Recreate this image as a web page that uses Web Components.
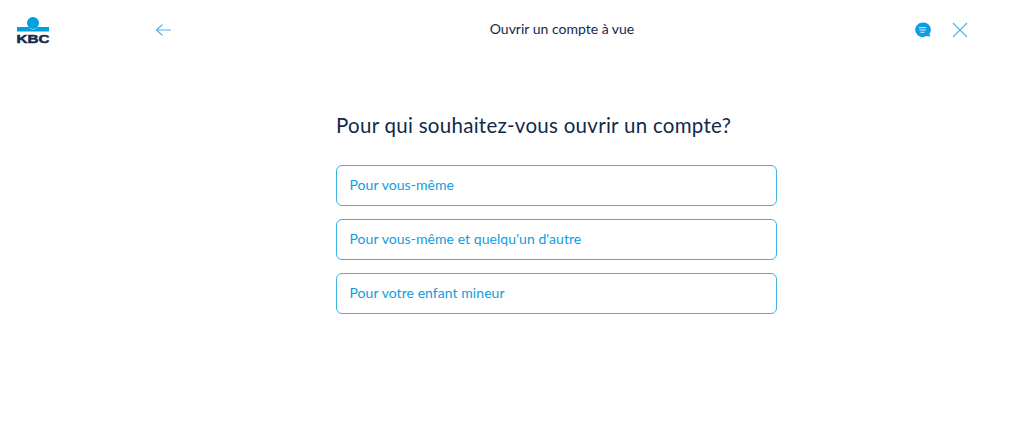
<!DOCTYPE html>
<html lang="fr">
<head>
<meta charset="utf-8">
<title>Ouvrir un compte à vue</title>
<style>
  html, body { margin: 0; background: #fff; }
  body { font-family: Lato, "Open Sans", sans-serif; color: #12294a; }
</style>
</head>
<body>
<kbc-page>
  <kbc-header slot="header" title="Ouvrir un compte à vue"></kbc-header>
  <kbc-question heading="Pour qui souhaitez-vous ouvrir un compte?">
    <kbc-option>Pour vous-même</kbc-option>
    <kbc-option>Pour vous-même et quelqu'un d'autre</kbc-option>
    <kbc-option>Pour votre enfant mineur</kbc-option>
  </kbc-question>
</kbc-page>

<script>
class KbcPage extends HTMLElement {
  constructor(){
    super();
    this.attachShadow({mode:'open'});
    this.shadowRoot.innerHTML = `
      <style>
        :host { display:block; width:1024px; height:442px; overflow:hidden; }
        main { padding:52px 0 0 336px; }
      </style>
      <slot name="header"></slot>
      <main><slot></slot></main>
    `;
  }
}
customElements.define('kbc-page', KbcPage);

class KbcHeader extends HTMLElement {
  constructor(){ super(); this.attachShadow({mode:'open'}); }
  connectedCallback(){ this.render(); }
  render(){
    const title = this.getAttribute('title') || '';
    this.shadowRoot.innerHTML = `
      <style>
        :host { display:block; height:60px; }
        .bar { display:grid; grid-template-columns:155px 18px 1fr 18px 20px 16px; height:60px; padding:0 56px 0 0; box-sizing:border-box; align-items:center; }
        .logo { display:block; margin:16px 0 0 16px; align-self:start; }
        .back, .chat, .close { display:block; }
        .title { font-size:14px; color:#12294a; text-align:center; padding:0 0 4px 37px; }
        .close { grid-column:6; }
      </style>
      <div class="bar">
        <svg class="logo" width="34" height="28" viewBox="0 0 34 28" aria-label="KBC">
          <circle cx="17" cy="7" r="6" fill="#009fe3"/>
          <path d="M1 11h11.500c1.200 1.600 2.800 2.400 4.500 2.400s3.300-.8 4.500-2.400H33v4.600H1z" fill="#009fe3"/>
          <text x="17" y="26.500" text-anchor="middle" textLength="33" lengthAdjust="spacingAndGlyphs"
            font-family="'Liberation Sans', sans-serif" font-weight="700" font-size="11.500" fill="#12294a" stroke="#12294a" stroke-width=".5">KBC</text>
        </svg>
        <svg class="back" width="18" height="14" viewBox="0 0 18 14" fill="none" stroke="#4db4e8" stroke-width="1.100">
          <path d="M16 7H2M7.500 1.500 1.500 7l6 5.500"/>
        </svg>
        <div class="title">${title}</div>
        <svg class="chat" width="18" height="18" viewBox="0 0 18 18">
          <path d="M8.500 1.500a7.300 7.300 0 1 0 3.900 13.500c1.300.5 2.900.6 4.300 0-.9-.5-1.300-1.200-1.300-2A7.300 7.300 0 0 0 8.500 1.500z" fill="#0f9ce0"/>
          <path d="M4.800 6.700h7.400M5.300 9h6.400M6.500 11.300h4" stroke="#d5f0fc" stroke-width="1" fill="none"/>
        </svg>
        <svg class="close" width="16" height="16" viewBox="0 0 16 16" fill="none" stroke="#4db4e8" stroke-width="1.100">
          <path d="M1 1l14 14M15 1 1 15"/>
        </svg>
      </div>
    `;
  }
}
customElements.define('kbc-header', KbcHeader);

class KbcQuestion extends HTMLElement {
  constructor(){ super(); this.attachShadow({mode:'open'}); }
  connectedCallback(){
    this.shadowRoot.innerHTML = `
      <style>
        :host { display:block; width:441px; }
        h1 { margin:0 0 26px; font-size:20.500px; line-height:27px; font-weight:400; color:#12294a; letter-spacing:.28px; white-space:nowrap; }
        .list { display:flex; flex-direction:column; gap:13px; }
      </style>
      <h1>${this.getAttribute('heading') || ''}</h1>
      <div class="list"><slot></slot></div>
    `;
  }
}
customElements.define('kbc-question', KbcQuestion);

class KbcOption extends HTMLElement {
  constructor(){
    super();
    this.attachShadow({mode:'open'});
    this.shadowRoot.innerHTML = `
      <style>
        :host { display:flex; align-items:center; box-sizing:border-box; height:41px; padding:0 12.500px 2px; border:1px solid #3fb0e9; border-radius:6px; background:#fff; color:#0f9ce0; font-size:14px; letter-spacing:.06px; }
      </style>
      <slot></slot>
    `;
  }
}
customElements.define('kbc-option', KbcOption);
</script>
</body>
</html>
